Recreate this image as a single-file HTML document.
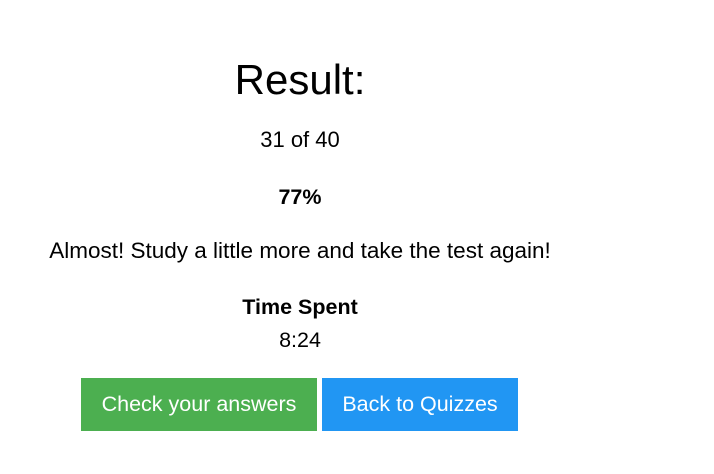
<!DOCTYPE html>
<html><head><style>
body{margin:0;width:714px;height:474px;background:#fff;font-family:"Liberation Sans",sans-serif;color:#000;position:relative;overflow:hidden}
.c{position:absolute;left:0;width:600px;text-align:center;white-space:nowrap}
.btn{position:absolute;top:378px;height:53px;line-height:53px;color:#fff;font-size:21.5px;text-align:center}
</style></head><body>
<div class="c" style="top:55px;font-size:42px;line-height:50px">Result:</div>
<div class="c" style="top:127px;font-size:22px;line-height:26px">31 of 40</div>
<div class="c" style="top:184px;font-size:21.5px;line-height:26px;font-weight:bold">77%</div>
<div class="c" style="top:238px;font-size:22.5px;line-height:26px">Almost! Study a little more and take the test again!</div>
<div class="c" style="top:294px;font-size:21.5px;line-height:26px;font-weight:bold">Time Spent</div>
<div class="c" style="top:327px;font-size:21.5px;line-height:26px">8:24</div>
<div class="btn" style="left:81px;width:236px;background:#4caf50">Check your answers</div>
<div class="btn" style="left:322px;width:196px;background:#2196f3">Back to Quizzes</div>
</body></html>
